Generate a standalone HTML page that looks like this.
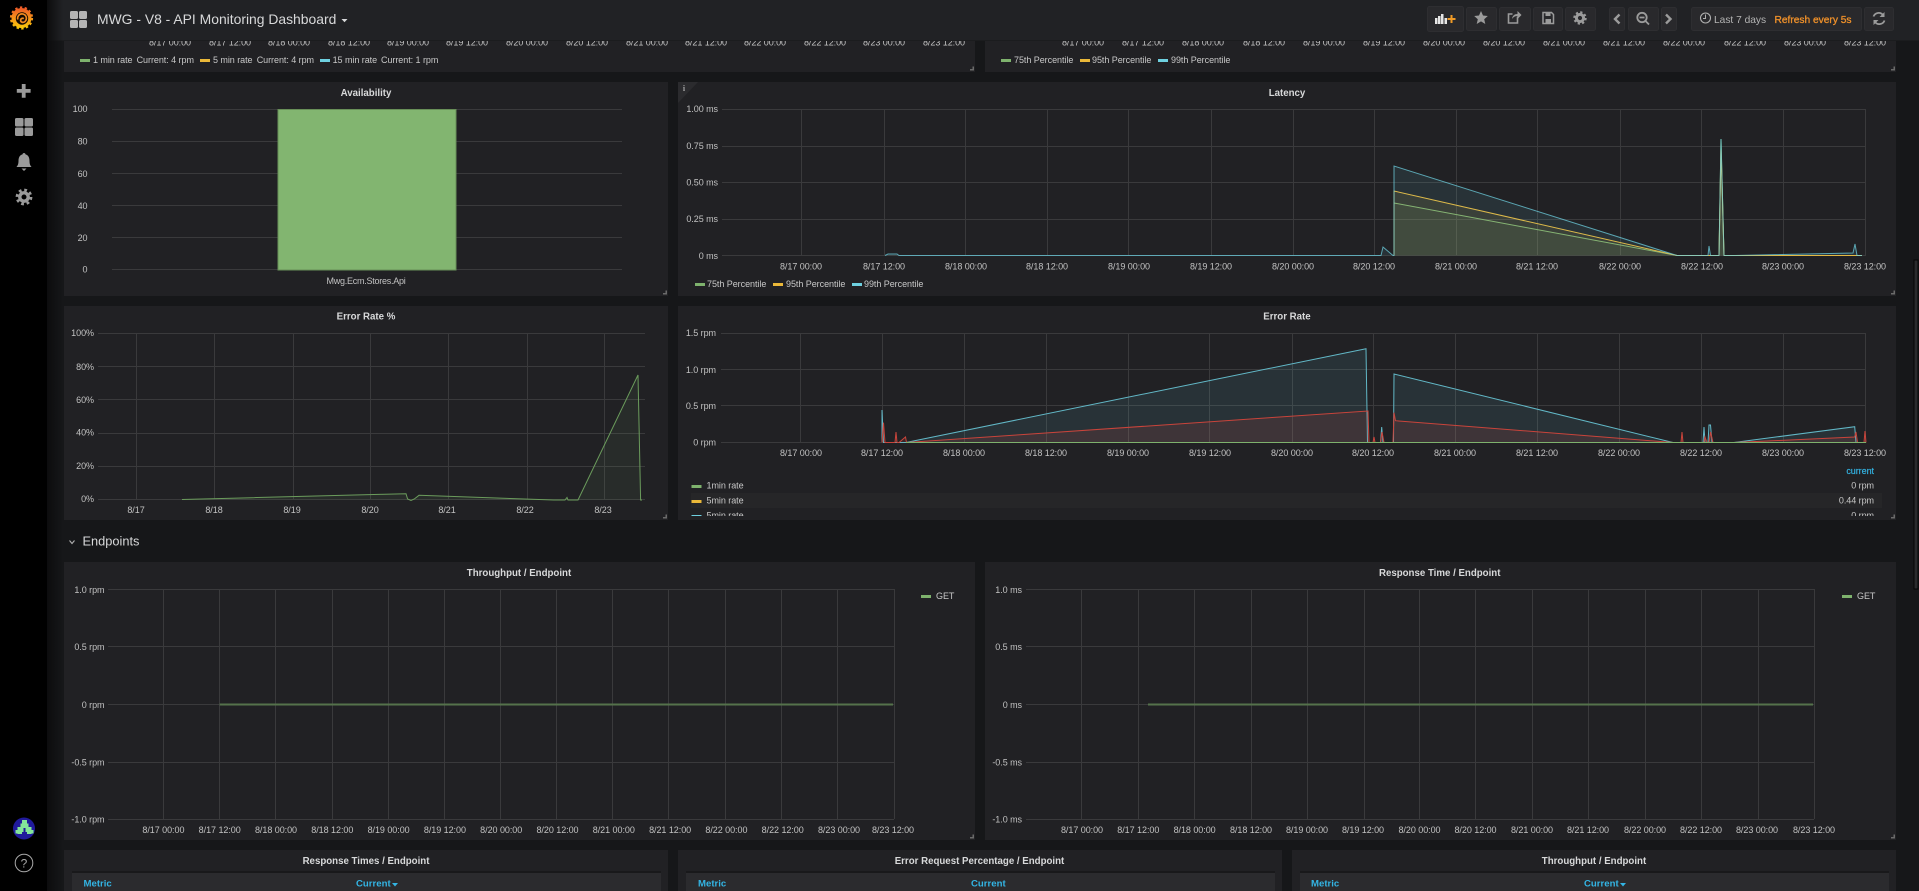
<!DOCTYPE html>
<html><head><meta charset="utf-8"><title>MWG - V8 - API Monitoring Dashboard</title>
<style>
html,body{margin:0;padding:0;background:#161719;width:1919px;height:891px;overflow:hidden}
svg{display:block;font-family:"Liberation Sans",Arial,sans-serif}
svg.root{filter:blur(.35px)}
.t{font-size:9.7px;font-weight:700;fill:#d8d9da;text-anchor:middle}
.k{font-size:9px;fill:#c2c2c2;text-anchor:middle;letter-spacing:-.05px}
.y{font-size:9px;fill:#c2c2c2;text-anchor:end;letter-spacing:-.05px}
.l{font-size:9px;fill:#c8c8c8;letter-spacing:-.05px}
.h{font-size:9.6px;font-weight:700;fill:#33b5e5}
.g{stroke:#3a3a3c;stroke-width:1;fill:none}
</style></head><body>
<svg class="root" width="1919" height="891" viewBox="0 0 1919 891" xmlns="http://www.w3.org/2000/svg">
<defs>
<linearGradient id="sh" x1="0" x2="1" y1="0" y2="0"><stop offset="0" stop-color="#0c0c0d"/><stop offset="1" stop-color="#0c0c0d" stop-opacity="0"/></linearGradient>
<linearGradient id="lg" x1="0" x2="0" y1="0" y2="1"><stop offset="0" stop-color="#f05a28"/><stop offset="1" stop-color="#fbca0a"/></linearGradient>
</defs>
<rect width="1919" height="891" fill="#161719"/>

<!-- panels -->
<g fill="#212124">
<rect x="64" y="20" width="911" height="52"/><rect x="985" y="20" width="911" height="52"/>
<rect x="64" y="82" width="604" height="214"/><rect x="678" y="82" width="1218" height="214"/>
<rect x="64" y="306" width="604" height="214"/><rect x="678" y="306" width="1218" height="214"/>
<rect x="64" y="562" width="911" height="278"/><rect x="985" y="562" width="911" height="278"/>
<rect x="64" y="850" width="604" height="41"/><rect x="678" y="850" width="604" height="41"/><rect x="1292" y="850" width="604" height="41"/>
</g>

<!-- row 0 -->
<g>
<text class="k" x="170" y="45.5">8/17 00:00</text><text class="k" x="230" y="45.5">8/17 12:00</text><text class="k" x="289" y="45.5">8/18 00:00</text><text class="k" x="349" y="45.5">8/18 12:00</text><text class="k" x="408" y="45.5">8/19 00:00</text><text class="k" x="467" y="45.5">8/19 12:00</text><text class="k" x="527" y="45.5">8/20 00:00</text><text class="k" x="587" y="45.5">8/20 12:00</text><text class="k" x="647" y="45.5">8/21 00:00</text><text class="k" x="706" y="45.5">8/21 12:00</text><text class="k" x="765" y="45.5">8/22 00:00</text><text class="k" x="825" y="45.5">8/22 12:00</text><text class="k" x="884" y="45.5">8/23 00:00</text><text class="k" x="944" y="45.5">8/23 12:00</text>
<text class="k" x="1083" y="45.5">8/17 00:00</text><text class="k" x="1143" y="45.5">8/17 12:00</text><text class="k" x="1203" y="45.5">8/18 00:00</text><text class="k" x="1264" y="45.5">8/18 12:00</text><text class="k" x="1324" y="45.5">8/19 00:00</text><text class="k" x="1384" y="45.5">8/19 12:00</text><text class="k" x="1444" y="45.5">8/20 00:00</text><text class="k" x="1504" y="45.5">8/20 12:00</text><text class="k" x="1564" y="45.5">8/21 00:00</text><text class="k" x="1624" y="45.5">8/21 12:00</text><text class="k" x="1684" y="45.5">8/22 00:00</text><text class="k" x="1745" y="45.5">8/22 12:00</text><text class="k" x="1805" y="45.5">8/23 00:00</text><text class="k" x="1865" y="45.5">8/23 12:00</text>
</g>
<rect x="80" y="59" width="10" height="3" fill="#7eb26d"/><text class="l" x="93" y="63.2">1 min rate</text><text class="l" x="136.6" y="63.2">Current: 4 rpm</text>
<rect x="200" y="59" width="10" height="3" fill="#eab839"/><text class="l" x="213" y="63.2">5 min rate</text><text class="l" x="256.7" y="63.2">Current: 4 rpm</text>
<rect x="320" y="59" width="10" height="3" fill="#6ed0e0"/><text class="l" x="332.6" y="63.2">15 min rate</text><text class="l" x="381" y="63.2">Current: 1 rpm</text>
<rect x="1001" y="59" width="10" height="3" fill="#7eb26d"/><text class="l" x="1014" y="63.2">75th Percentile</text>
<rect x="1080" y="59" width="10" height="3" fill="#eab839"/><text class="l" x="1092" y="63.2">95th Percentile</text>
<rect x="1158" y="59" width="10" height="3" fill="#6ed0e0"/><text class="l" x="1171" y="63.2">99th Percentile</text>

<!-- Availability -->
<text class="t" x="366" y="96">Availability</text>
<path class="g" d="M112 109.5H622M112 141.5H622M112 173.5H622M112 205.5H622M112 237.5H622M112 269.5H622"/>
<rect x="278" y="109.5" width="178" height="160.5" fill="#82b570" stroke="#688f58"/>
<g><text class="y" x="87.5" y="112">100</text><text class="y" x="87.5" y="144.5">80</text><text class="y" x="87.5" y="176.8">60</text><text class="y" x="87.5" y="209">40</text><text class="y" x="87.5" y="241">20</text><text class="y" x="87.5" y="272.5">0</text></g>
<text class="k" x="366" y="284" style="letter-spacing:-.25px">Mwg.Ecm.Stores.Api</text>

<!-- Latency -->
<path d="M678 82H698L678 103Z" fill="#2b2b2e"/>
<text x="684" y="91" font-size="8" font-weight="700" fill="#a8a8a8" text-anchor="middle" font-family="Liberation Serif,serif">i</text>
<text class="t" x="1287" y="96">Latency</text>
<path class="g" d="M722 109.5H1866M722 146.5H1866M722 182.5H1866M722 219.5H1866M722 255.5H1866M801.5 109V255M884.5 109V255M965.5 109V255M1047.5 109V255M1128.5 109V255M1211.5 109V255M1293.5 109V255M1374.5 109V255M1456.5 109V255M1537.5 109V255M1620.5 109V255M1701.5 109V255M1783.5 109V255M1865.5 109V255"/>
<g><text class="y" x="718" y="112">1.00 ms</text><text class="y" x="718" y="149">0.75 ms</text><text class="y" x="718" y="185.5">0.50 ms</text><text class="y" x="718" y="222">0.25 ms</text><text class="y" x="718" y="259">0 ms</text></g>
<g><text class="k" x="801" y="269.5">8/17 00:00</text><text class="k" x="884" y="269.5">8/17 12:00</text><text class="k" x="966" y="269.5">8/18 00:00</text><text class="k" x="1047" y="269.5">8/18 12:00</text><text class="k" x="1129" y="269.5">8/19 00:00</text><text class="k" x="1211" y="269.5">8/19 12:00</text><text class="k" x="1293" y="269.5">8/20 00:00</text><text class="k" x="1374" y="269.5">8/20 12:00</text><text class="k" x="1456" y="269.5">8/21 00:00</text><text class="k" x="1537" y="269.5">8/21 12:00</text><text class="k" x="1620" y="269.5">8/22 00:00</text><text class="k" x="1702" y="269.5">8/22 12:00</text><text class="k" x="1783" y="269.5">8/23 00:00</text><text class="k" x="1865" y="269.5">8/23 12:00</text></g>
<g fill="#7eb26d" fill-opacity=".1" stroke="#7eb26d"><path d="M1394 255.5V203L1677 255.5H1719L1721 139L1724 255.5H1862"/></g>
<g fill="#eab839" fill-opacity=".1" stroke="#eab839"><path d="M1394 255.5V191L1677 255.5H1719L1721 150L1724 255.5H1860L1862 255.5"/></g>
<g fill="#6ed0e0" fill-opacity=".1" stroke="#6ed0e0" stroke-opacity=".75"><path d="M885 255.5L888 254L897 254L899 255.5H1381L1383 247L1393 255.5H1394V166L1677 255.5H1708L1709 246L1710.5 255.5H1719L1721 139L1724 255.5H1735L1853 253L1855 244L1857 255.5H1862"/></g>
<rect x="695" y="283" width="10" height="3" fill="#7eb26d"/><text class="l" x="707" y="287.2">75th Percentile</text>
<rect x="773" y="283" width="10" height="3" fill="#eab839"/><text class="l" x="786" y="287.2">95th Percentile</text>
<rect x="852" y="283" width="10" height="3" fill="#6ed0e0"/><text class="l" x="864" y="287.2">99th Percentile</text>

<!-- Error Rate % -->
<text class="t" x="366" y="319.5">Error Rate %</text>
<path class="g" d="M98 333.5H645M98 366.5H645M98 399.5H645M98 433.5H645M98 466.5H645M98 499.5H645M136.5 333V499M214.5 333V499M293.5 333V499M370.5 333V499M448.5 333V499M527.5 333V499M604.5 333V499"/>
<g><text class="y" x="94" y="336">100%</text><text class="y" x="94" y="370">80%</text><text class="y" x="94" y="403">60%</text><text class="y" x="94" y="435.5">40%</text><text class="y" x="94" y="469">20%</text><text class="y" x="94" y="502">0%</text></g>
<g><text class="k" x="136" y="513">8/17</text><text class="k" x="214" y="513">8/18</text><text class="k" x="292" y="513">8/19</text><text class="k" x="370" y="513">8/20</text><text class="k" x="447" y="513">8/21</text><text class="k" x="525" y="513">8/22</text><text class="k" x="603" y="513">8/23</text></g>
<path d="M182 499.5L406 493.7L407.6 499L411 500.5L414.3 499L419 495.3L553.6 500H565L567 497.5L568 500H578L638 375L640.6 500H642" fill="#7eb26d" fill-opacity=".08" stroke="#6b9c5c"/>

<!-- Error Rate -->
<text class="t" x="1287" y="319.5">Error Rate</text>
<path class="g" d="M721 333.5H1866M721 369.5H1866M721 405.5H1866M721 442.5H1866M800.5 333V442M882.5 333V442M964.5 333V442M1046.5 333V442M1128.5 333V442M1209.5 333V442M1292.5 333V442M1373.5 333V442M1455.5 333V442M1537.5 333V442M1619.5 333V442M1701.5 333V442M1783.5 333V442M1865.5 333V442"/>
<g><text class="y" x="716" y="336">1.5 rpm</text><text class="y" x="716" y="373">1.0 rpm</text><text class="y" x="716" y="409">0.5 rpm</text><text class="y" x="716" y="445.5">0 rpm</text></g>
<g><text class="k" x="801" y="456">8/17 00:00</text><text class="k" x="882" y="456">8/17 12:00</text><text class="k" x="964" y="456">8/18 00:00</text><text class="k" x="1046" y="456">8/18 12:00</text><text class="k" x="1128" y="456">8/19 00:00</text><text class="k" x="1210" y="456">8/19 12:00</text><text class="k" x="1292" y="456">8/20 00:00</text><text class="k" x="1373" y="456">8/20 12:00</text><text class="k" x="1455" y="456">8/21 00:00</text><text class="k" x="1537" y="456">8/21 12:00</text><text class="k" x="1619" y="456">8/22 00:00</text><text class="k" x="1701" y="456">8/22 12:00</text><text class="k" x="1783" y="456">8/23 00:00</text><text class="k" x="1865" y="456">8/23 12:00</text></g>
<path d="M882 442.5V410L883.5 442.5H906L1366 348.7L1367.5 442.5H1380.5L1381.7 427L1383 442.5H1393.5L1394 374L1673 442.5H1703L1704 427L1705 442.5H1708L1709 425H1710.5L1712 442.5H1734L1854.7 426.7L1856 442.5H1865" fill="#6ed0e0" fill-opacity=".1" stroke="#62b8c7"/>
<path d="M882 442.5L883.5 422.7L885 442.5H895L896 432L897 442.5H899L905.5 437L906.5 442.5L1368 411L1369 442.5H1373L1374 437L1375 442.5H1380.5L1382 432L1384 442.5H1393L1394 412.7L1395.5 420.7L1673 442.5H1681L1682 432L1683 442.5H1704L1705 437L1707 442.5H1709L1710.6 432L1713 442.5H1734L1854.7 437L1856 432L1857.5 442.5H1864L1865 431L1866 442.5" fill="#e24d42" fill-opacity=".12" stroke="#c9443b"/>
<path d="M906 442.5H1866" stroke="#7eb26d" fill="none"/>
<text class="l" x="1874" y="474.2" text-anchor="end" style="fill:#33b5e5;stroke:#33b5e5;stroke-width:.15">current</text>
<rect x="691" y="493" width="1191" height="15" fill="#262628"/>
<svg x="685" y="476" width="1205" height="40" viewBox="685 476 1205 40">
<rect x="691.5" y="485" width="10" height="3" fill="#7eb26d"/><text class="l" x="706.5" y="488.5">1min rate</text><text class="l" x="1874" y="488.5" text-anchor="end">0 rpm</text>
<rect x="691.5" y="500" width="10" height="3" fill="#eab839"/><text class="l" x="706.5" y="503.5">5min rate</text><text class="l" x="1874" y="503.5" text-anchor="end">0.44 rpm</text>
<rect x="691.5" y="515" width="10" height="3" fill="#6ed0e0"/><text class="l" x="706.5" y="518.5">5min rate</text><text class="l" x="1874" y="518.5" text-anchor="end">0 rpm</text>
</svg>

<!-- Endpoints heading -->
<path d="M69.5 540.5L72 543.5L74.5 540.5" fill="none" stroke="#b0b0b0" stroke-width="1.1"/>
<text x="82.5" y="545.5" font-size="12.8" fill="#d8d9da">Endpoints</text>

<!-- Throughput / Endpoint -->
<text class="t" x="519" y="576">Throughput / Endpoint</text>
<path class="g" d="M108 589.5H894M108 646.5H894M108 704.5H894M108 762.5H894M108 819.5H894M163.5 589V819M219.5 589V819M275.5 589V819M332.5 589V819M388.5 589V819M444.5 589V819M500.5 589V819M556.5 589V819M612.5 589V819M668.5 589V819M725.5 589V819M781.5 589V819M837.5 589V819M894.5 589V819"/>
<g><text class="y" x="104.5" y="592.8">1.0 rpm</text><text class="y" x="104.5" y="649.8">0.5 rpm</text><text class="y" x="104.5" y="707.8">0 rpm</text><text class="y" x="104.5" y="765.5">-0.5 rpm</text><text class="y" x="104.5" y="822.5">-1.0 rpm</text></g>
<g><text class="k" x="163.4" y="833">8/17 00:00</text><text class="k" x="219.7" y="833">8/17 12:00</text><text class="k" x="276" y="833">8/18 00:00</text><text class="k" x="332.3" y="833">8/18 12:00</text><text class="k" x="388.6" y="833">8/19 00:00</text><text class="k" x="444.9" y="833">8/19 12:00</text><text class="k" x="501.2" y="833">8/20 00:00</text><text class="k" x="557.5" y="833">8/20 12:00</text><text class="k" x="613.8" y="833">8/21 00:00</text><text class="k" x="670.1" y="833">8/21 12:00</text><text class="k" x="726.4" y="833">8/22 00:00</text><text class="k" x="782.7" y="833">8/22 12:00</text><text class="k" x="839" y="833">8/23 00:00</text><text class="k" x="893" y="833">8/23 12:00</text></g>
<path d="M219.6 704.5H893" stroke="#55724b" stroke-width="2" fill="none"/>
<rect x="921" y="595" width="10" height="3" fill="#7eb26d"/><text class="l" x="936" y="599.2">GET</text>

<!-- Response Time / Endpoint -->
<text class="t" x="1439.7" y="576">Response Time / Endpoint</text>
<path class="g" d="M1026 589.5H1814M1026 646.5H1814M1026 704.5H1814M1026 762.5H1814M1026 819.5H1814M1081.5 589V819M1138.5 589V819M1194.5 589V819M1251.5 589V819M1307.5 589V819M1364.5 589V819M1419.5 589V819M1475.5 589V819M1532.5 589V819M1588.5 589V819M1645.5 589V819M1701.5 589V819M1758.5 589V819M1814.5 589V819"/>
<g><text class="y" x="1022" y="592.8">1.0 ms</text><text class="y" x="1022" y="649.8">0.5 ms</text><text class="y" x="1022" y="707.8">0 ms</text><text class="y" x="1022" y="765.5">-0.5 ms</text><text class="y" x="1022" y="822.5">-1.0 ms</text></g>
<g><text class="k" x="1082" y="833">8/17 00:00</text><text class="k" x="1138.3" y="833">8/17 12:00</text><text class="k" x="1194.6" y="833">8/18 00:00</text><text class="k" x="1251" y="833">8/18 12:00</text><text class="k" x="1307" y="833">8/19 00:00</text><text class="k" x="1363" y="833">8/19 12:00</text><text class="k" x="1419.5" y="833">8/20 00:00</text><text class="k" x="1475.5" y="833">8/20 12:00</text><text class="k" x="1532" y="833">8/21 00:00</text><text class="k" x="1588" y="833">8/21 12:00</text><text class="k" x="1645" y="833">8/22 00:00</text><text class="k" x="1701" y="833">8/22 12:00</text><text class="k" x="1757" y="833">8/23 00:00</text><text class="k" x="1814" y="833">8/23 12:00</text></g>
<path d="M1148 704.5H1813" stroke="#55724b" stroke-width="2" fill="none"/>
<rect x="1842" y="595" width="10" height="3" fill="#7eb26d"/><text class="l" x="1857" y="599.2">GET</text>

<!-- row 4 -->
<text class="t" x="366" y="864">Response Times / Endpoint</text>
<text class="t" x="979.5" y="864">Error Request Percentage / Endpoint</text>
<text class="t" x="1594" y="864">Throughput / Endpoint</text>
<g fill="#2b2b2e">
<rect x="72" y="873" width="589" height="18"/><rect x="686" y="873" width="589" height="18"/><rect x="1300" y="873" width="589" height="18"/>
</g>
<g fill="#19191b"><rect x="72" y="871" width="589" height="2"/><rect x="686" y="871" width="589" height="2"/><rect x="1300" y="871" width="589" height="2"/></g>
<text class="h" x="83.5" y="886.5">Metric</text><text class="h" x="356" y="886.5">Current</text><path d="M392 883h6l-3 3.500z" fill="#33b5e5"/>
<text class="h" x="698" y="886.5">Metric</text><text class="h" x="971" y="886.5">Current</text>
<text class="h" x="1311" y="886.5">Metric</text><text class="h" x="1584" y="886.5">Current</text><path d="M1620 883h6l-3 3.500z" fill="#33b5e5"/>

<!-- resize handles -->
<path fill="#6a6a6a" d="M974 66.5v4h-4v-1.5h2.5v-2.5zM1895 66.5v4h-4v-1.5h2.5v-2.5zM667 290.5v4h-4v-1.5h2.5v-2.5zM1895 290.5v4h-4v-1.5h2.5v-2.5zM667 514.5v4h-4v-1.5h2.5v-2.5zM1895 514.5v4h-4v-1.5h2.5v-2.5zM974 834.5v4h-4v-1.5h2.5v-2.5zM1895 834.5v4h-4v-1.5h2.5v-2.5z"/>

<!-- scrollbar -->
<rect x="1914" y="260" width="4" height="329" fill="#2a2b2d" stroke="#050505"/>

<!-- top bar -->
<rect x="47" y="0" width="1872" height="41" fill="#212225"/>
<rect x="47" y="40" width="1872" height="1" fill="#1b1c1e"/>
<g fill="#b4b4b4"><rect x="70" y="11" width="8" height="8" rx="1.5"/><rect x="79" y="11" width="8" height="8" rx="1.5"/><rect x="70" y="20" width="8" height="8" rx="1.5"/><rect x="79" y="20" width="8" height="8" rx="1.5"/></g>
<text x="97" y="24" font-size="13.9" fill="#d8d9da">MWG - V8 - API Monitoring Dashboard</text>
<path d="M341.5 19h6l-3 3.2z" fill="#d8d9da"/>

<!-- toolbar -->
<g fill="#29292c" stroke="#2e2e31">
<rect x="1427.5" y="6.5" width="36" height="25" rx="2"/><rect x="1466.5" y="7.5" width="30" height="23" rx="2"/><rect x="1499.5" y="7.5" width="31" height="23" rx="2"/><rect x="1533.5" y="7.5" width="29" height="23" rx="2"/><rect x="1565.5" y="7.5" width="30" height="23" rx="2"/><rect x="1609.5" y="7.5" width="15" height="23" rx="2"/><rect x="1628.5" y="7.5" width="30" height="23" rx="2"/><rect x="1661.5" y="7.5" width="15" height="23" rx="2"/><rect x="1691.5" y="7.5" width="170" height="23" rx="2"/><rect x="1864.5" y="7.5" width="29" height="23" rx="2"/>
</g>
<g fill="#e6e6e6"><rect x="1435" y="18" width="2.5" height="6"/><rect x="1438" y="16" width="2.5" height="8"/><rect x="1441" y="14" width="2.5" height="10"/><rect x="1444.5" y="18" width="2.5" height="6"/></g>
<path d="M1447.5 18h3v-3h2v3h3v2h-3v3h-2v-3h-3z" fill="#f09a26"/>
<path d="M1481 11l2 4.5 4.8.5-3.6 3.2 1.1 4.8-4.3-2.6-4.3 2.6 1.1-4.8-3.6-3.2 4.8-.5z" fill="#9b9b9b"/>
<path d="M1517.5 16.5v6.5h-9v-9h4" fill="none" stroke="#9b9b9b" stroke-width="1.6"/><path d="M1512 19c.5-3.500 2.500-5 5.500-5v-3l4 4-4 4v-3c-2.500 0-4 1-5.500 3z" fill="#9b9b9b"/>
<path d="M1543 12.500h8.500l2 2v9h-10.500z" fill="none" stroke="#9b9b9b" stroke-width="1.500"/><path d="M1545.500 12.500h5v3.500h-5zM1545.500 19h5.500v4.500h-5.500z" fill="#9b9b9b"/>
<circle cx="1580" cy="18" r="3.600" fill="none" stroke="#9b9b9b" stroke-width="3"/><circle cx="1580" cy="18" r="5.700" fill="none" stroke="#9b9b9b" stroke-width="2" stroke-dasharray="2.240 2.240"/>
<path d="M1619.500 14.500l-4.500 4.500 4.500 4.500" fill="none" stroke="#9b9b9b" stroke-width="2.400"/>
<circle cx="1642" cy="17.500" r="4.700" fill="none" stroke="#9b9b9b" stroke-width="1.800"/><path d="M1639.500 17.500h5M1645.500 21l3.500 3.500" stroke="#9b9b9b" stroke-width="1.800" fill="none"/>
<path d="M1666 14.500l4.500 4.500-4.500 4.500" fill="none" stroke="#9b9b9b" stroke-width="2.400"/>
<circle cx="1705.500" cy="18" r="5" fill="none" stroke="#b0b0b0" stroke-width="1.100"/><path d="M1705.500 14.500v4h-2.500" fill="none" stroke="#b0b0b0" stroke-width="1"/>
<text x="1714" y="23" font-size="10.200" fill="#b4b4b4">Last 7 days</text>
<text x="1774.500" y="23" font-size="10.200" fill="#f0912a" stroke="#f0912a" stroke-width=".3">Refresh every 5s</text>
<path d="M1873.500 16.500a5.500 5.500 0 0 1 9.500-1.500M1884.500 20.500a5.500 5.500 0 0 1-9.500 1.500" fill="none" stroke="#9b9b9b" stroke-width="1.800"/><path d="M1884.500 12v5h-5zM1873.500 25v-5h5z" fill="#9b9b9b"/>

<!-- sidebar -->
<rect x="47" y="0" width="16" height="891" fill="url(#sh)"/>
<rect x="0" y="0" width="47" height="891" fill="#000"/>
<circle cx="21.500" cy="18" r="10" fill="url(#lg)"/>
<circle cx="21.500" cy="18" r="10.600" fill="none" stroke="url(#lg)" stroke-width="2" stroke-dasharray="2.400 2.400"/>
<circle cx="22" cy="18.500" r="6.200" fill="#120a04"/>
<path d="M17.800 19.500a4.400 4.400 0 1 1 7.200 2c-1.700 1.500-4.200.9-4.400-1.100a2 2 0 0 1 3.200-1.700" fill="none" stroke="#f28a20" stroke-width="1.700"/>
<path d="M21.800 84h3.800v5h5v3.800h-5v5h-3.800v-5h-5v-3.800h5z" fill="#9a9a9a"/>
<g fill="#9a9a9a"><rect x="15" y="118" width="8.500" height="8.500" rx="1.500"/><rect x="24.500" y="118" width="8.500" height="8.500" rx="1.500"/><rect x="15" y="127.500" width="8.500" height="8.500" rx="1.500"/><rect x="24.500" y="127.500" width="8.500" height="8.500" rx="1.500"/></g>
<path d="M24 153c1 0 1.500.8 1.500 1.400 3 .8 4 3.400 4 6.600 0 3 .8 4.500 2 6H16.500c1.200-1.500 2-3 2-6 0-3.200 1-5.800 4-6.600 0-.6.500-1.400 1.500-1.400zM21.500 168.500h5l-2.500 2.500z" fill="#9a9a9a"/>
<circle cx="24" cy="197" r="4.200" fill="none" stroke="#9a9a9a" stroke-width="3.400"/><circle cx="24" cy="197" r="7" fill="none" stroke="#9a9a9a" stroke-width="2.800" stroke-dasharray="2.750 2.750"/>
<circle cx="24" cy="828.500" r="11" fill="#201a9b"/>
<g fill="#84e59a"><rect x="22" y="820" width="5" height="4"/><rect x="20.500" y="823.500" width="8" height="10.500"/><rect x="17.500" y="827" width="14" height="7"/><rect x="15.500" y="830" width="18" height="3.500"/></g>
<rect x="23.500" y="828" width="2" height="5" fill="#201a9b"/><rect x="22" y="832" width="5" height="2.500" fill="#201a9b"/>
<circle cx="24" cy="863" r="8.800" fill="none" stroke="#a8a8a8" stroke-width="1"/>
<text x="24" y="867.500" font-size="12" text-anchor="middle" fill="#a8a8a8">?</text>
</svg>
</body></html>
